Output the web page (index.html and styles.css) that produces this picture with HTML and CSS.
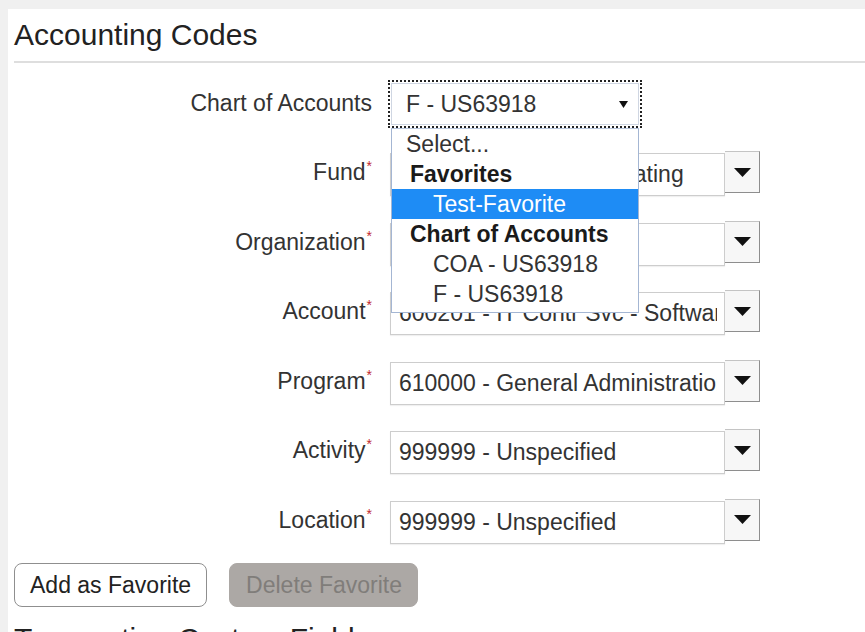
FILE: index.html
```html
<!DOCTYPE html>
<html lang="en">
<head>
<meta charset="utf-8">
<title>Accounting Codes</title>
<link rel="stylesheet" href="styles.css">
</head>
<body>
<div class="panel">
  <h2 class="section-title">Accounting Codes</h2>

  <div class="code-form">
    <label class="field-label">Chart of Accounts</label>
    <div class="field">
      <div class="coa-select">
        <span class="coa-value">F - US63918</span>
        <svg class="coa-caret" width="9" height="7" viewBox="0 0 9 7"><polygon points="0,0 9,0 4.5,7" fill="#111"/></svg>
      </div>
      <ul class="coa-list">
        <li class="opt">Select...</li>
        <li class="group">Favorites</li>
        <li class="opt sub selected">Test-Favorite</li>
        <li class="group">Chart of Accounts</li>
        <li class="opt sub">COA - US63918</li>
        <li class="opt sub">F - US63918</li>
      </ul>
    </div>

    <label class="field-label">Fund<span class="req">*</span></label>
    <div class="field combo">
      <div class="combo-input"><span class="combo-text">110000 - General Operating</span></div>
      <button class="combo-btn" type="button"><svg width="17" height="9" viewBox="0 0 17 9"><polygon points="0,0 17,0 8.5,9" fill="#111"/></svg></button>
    </div>

    <label class="field-label">Organization<span class="req">*</span></label>
    <div class="field combo">
      <div class="combo-input"><span class="combo-text"></span></div>
      <button class="combo-btn" type="button"><svg width="17" height="9" viewBox="0 0 17 9"><polygon points="0,0 17,0 8.5,9" fill="#111"/></svg></button>
    </div>

    <label class="field-label">Account<span class="req">*</span></label>
    <div class="field combo">
      <div class="combo-input"><span class="combo-text">600201 - IT Contr Svc - Software</span></div>
      <button class="combo-btn" type="button"><svg width="17" height="9" viewBox="0 0 17 9"><polygon points="0,0 17,0 8.5,9" fill="#111"/></svg></button>
    </div>

    <label class="field-label">Program<span class="req">*</span></label>
    <div class="field combo">
      <div class="combo-input"><span class="combo-text">610000 - General Administration</span></div>
      <button class="combo-btn" type="button"><svg width="17" height="9" viewBox="0 0 17 9"><polygon points="0,0 17,0 8.5,9" fill="#111"/></svg></button>
    </div>

    <label class="field-label">Activity<span class="req">*</span></label>
    <div class="field combo">
      <div class="combo-input"><span class="combo-text">999999 - Unspecified</span></div>
      <button class="combo-btn" type="button"><svg width="17" height="9" viewBox="0 0 17 9"><polygon points="0,0 17,0 8.5,9" fill="#111"/></svg></button>
    </div>

    <label class="field-label">Location<span class="req">*</span></label>
    <div class="field combo">
      <div class="combo-input"><span class="combo-text">999999 - Unspecified</span></div>
      <button class="combo-btn" type="button"><svg width="17" height="9" viewBox="0 0 17 9"><polygon points="0,0 17,0 8.5,9" fill="#111"/></svg></button>
    </div>
  </div>

  <div class="fav-actions">
    <button class="btn" type="button">Add as Favorite</button>
    <button class="btn btn-disabled" type="button" disabled>Delete Favorite</button>
  </div>

  <h2 class="section-title next">Transaction Custom Fields</h2>
</div>
</body>
</html>
```

FILE: styles.css
```css
html, body {
  margin: 0;
  height: 100%;
  overflow: hidden;
}

body {
  background: #f0f0f0;
  font-family: "Liberation Sans", Arial, sans-serif;
  color: #333;
}

.panel {
  margin: 9px 0 0 8px;
  padding: 0 0 0 6px;
  background: #fff;
  min-height: 100%;
}

.section-title {
  margin: 0;
  padding-top: 8px;
  padding-bottom: 8px;
  font-size: 30px;
  line-height: 36px;
  font-weight: normal;
  color: #222;
  border-bottom: 2px solid #dedede;
}

.section-title.next {
  margin-top: 14px;
  padding-top: 0;
  border-bottom: none;
}

/* label / field grid */
.code-form {
  margin-top: 19px;
  display: grid;
  grid-template-columns: 358px 1fr;
  column-gap: 18px;
  row-gap: 25.5px;
  grid-auto-rows: 44px;
  align-items: center;
}

.field-label {
  text-align: right;
  font-size: 23px;
  line-height: 28px;
  color: #333;
  white-space: nowrap;
  margin-top: -3px;
}

.req {
  color: #c0282d;
  font-size: 14px;
  line-height: 0;
  vertical-align: 9px;
  margin-left: 1px;
}

.field {
  position: relative;
  height: 44px;
  display: flex;
  align-items: center;
}

/* focused native-style select */
.coa-select {
  box-sizing: border-box;
  margin-left: 1px;
  width: 248px;
  height: 42px;
  display: flex;
  align-items: center;
  justify-content: space-between;
  padding: 0 10px 0 14px;
  border: 1px solid #cfd6e2;
  outline: 2px dotted #222;
  outline-offset: 1px;
  background: #fff;
  font-size: 23px;
  color: #333;
}

.coa-caret {
  display: block;
}

/* open option list */
.coa-list {
  position: absolute;
  top: 46px;
  left: 1px;
  z-index: 5;
  box-sizing: border-box;
  width: 248px;
  margin: 0;
  padding: 0 0 3px;
  list-style: none;
  background: #fff;
  border: 1px solid #a4b6d3;
  border-top-color: #b8c6dc;
  font-size: 23px;
}

.coa-list li {
  height: 30px;
  line-height: 30px;
  padding-left: 14px;
  white-space: nowrap;
  color: #333;
}

.coa-list .group {
  font-weight: bold;
  padding-left: 18px;
  color: #1a1a1a;
}

.coa-list .sub {
  padding-left: 41px;
}

.coa-list .selected {
  background: #1e8cf5;
  color: #fff;
}

/* text box with dropdown button */
.combo {
  align-items: flex-start;
  height: 45px;
}

.combo-input {
  box-sizing: border-box;
  width: 335px;
  height: 43px;
  margin-top: 2px;
  padding: 0 7px 0 8px;
  border: 1px solid #cdcdcd;
  box-shadow: 0 1px 1px rgba(0, 0, 0, 0.06);
  background: #fff;
  font-size: 23px;
  line-height: 41px;
  color: #333;
}

.combo-text {
  display: block;
  white-space: nowrap;
  overflow: hidden;
}

.combo-btn {
  box-sizing: border-box;
  width: 35px;
  height: 42px;
  padding: 0;
  display: flex;
  align-items: center;
  justify-content: center;
  background: #f7f7f7;
  border: 1px solid #c4c4c4;
  border-right-color: #8e8e8e;
  border-bottom-color: #8e8e8e;
  border-left: none;
}

/* favourite actions */
.fav-actions {
  margin-top: 20px;
  display: flex;
  gap: 22px;
}

.btn {
  box-sizing: border-box;
  height: 44px;
  padding: 0 15px;
  border: 1.5px solid #8f8f8f;
  border-radius: 8px;
  background: #fff;
  font-family: "Liberation Sans", Arial, sans-serif;
  font-size: 23px;
  color: #222;
}

.btn-disabled {
  padding: 0 15px 0 16px;
  border-color: #aca8a5;
  background: #aca8a5;
  color: #807d7a;
}
```
